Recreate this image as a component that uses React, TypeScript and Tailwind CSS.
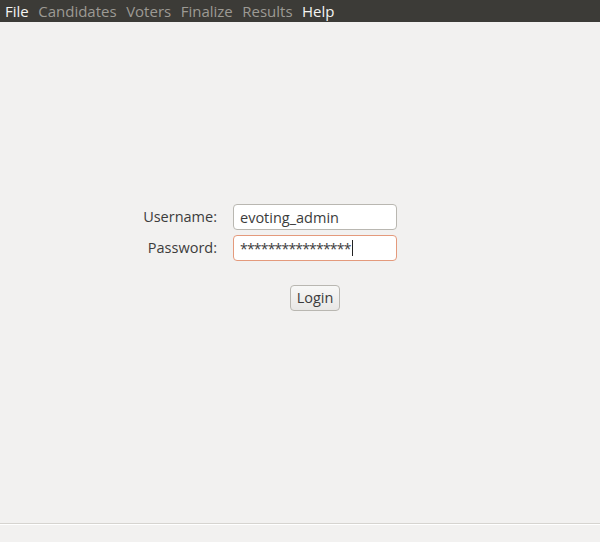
import { useState } from "react";

const menus = [
  { label: "File", on: true },
  { label: "Candidates", on: false },
  { label: "Voters", on: false },
  { label: "Finalize", on: false },
  { label: "Results", on: false },
  { label: "Help", on: true },
];

export default function App() {
  const [username, setUsername] = useState("evoting_admin");
  const password = "****************";

  return (
    <div
      className="flex flex-col w-[600px] h-[542px] bg-[#f2f1f0] text-[#3c3c3c]"
      style={{ fontFamily: "'Open Sans', 'Noto Sans', sans-serif" }}
    >
      {/* menu bar */}
      <div className="flex items-center h-[22px] bg-[#3c3b37] pl-[5px] gap-[9.5px] text-[15px] leading-none">
        {menus.map((m) => (
          <span key={m.label} className={m.on ? "text-[#f4f4f2]" : "text-[#9c9a94]"}>
            {m.label}
          </span>
        ))}
      </div>

      <div className="flex-1">
        <div className="ml-[144px] mt-[182px] grid grid-cols-[73px_164px] gap-x-[16px] gap-y-[5px] text-[14.5px]">
          <label className="h-[26px] flex items-center justify-end whitespace-nowrap">Username:</label>
          <input
            value={username}
            onChange={(e) => setUsername(e.target.value)}
            className="h-[26px] rounded-[4px] border border-[#b9b7b1] bg-white px-[6px] text-[14.5px] text-[#3c3c3c] outline-none"
          />
          <label className="h-[26px] flex items-center justify-end whitespace-nowrap">Password:</label>
          <div className="h-[26px] rounded-[4px] border border-[#e49a7c] bg-white px-[6px] flex items-center text-[14px]">
            <span className="tracking-[-0.8px]">{password}</span>
            <span className="w-px h-[16px] ml-[1px] bg-[#222]" />
          </div>
          <div />
          <div className="flex justify-center mt-[19px]">
            <button className="h-[26px] px-[6px] rounded-[4px] border border-[#b9b7b1] bg-gradient-to-b from-[#f8f8f7] to-[#e8e7e5] text-[14.5px]">
              Login
            </button>
          </div>
        </div>
      </div>

      {/* status bar */}
      <div className="h-[19px] border-t border-[#d6d4d0] shadow-[inset_0_1px_0_#ffffff]" />
    </div>
  );
}
